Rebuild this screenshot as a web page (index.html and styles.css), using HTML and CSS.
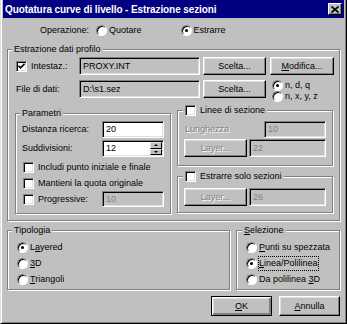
FILE: index.html
```html
<!DOCTYPE html>
<html lang="it">
<head>
    <meta charset="UTF-8">
    <meta name="viewport" content="width=device-width, initial-scale=1.0">
    <title>Quotatura curve di livello - Estrazione sezioni</title>
    <link rel="stylesheet" href="styles.css">
</head>
<body>
    <div class="window">
        <div class="titlebar">
            <span class="title">Quotatura curve di livello - Estrazione sezioni</span>
            <span class="close">
                <svg width="8" height="7" viewBox="0 0 8 7"><path d="M0.5 0.5 L7.5 6.5 M7.5 0.5 L0.5 6.5" stroke="#000" stroke-width="1.6" fill="none"/></svg>
            </span>
        </div>

        <div class="op-row">
            <span class="op-label">Operazione:</span>
            <span class="opt op-quotare"><span class="radio"></span>Quotare</span>
            <span class="opt op-estrarre"><span class="radio on"></span>Estrarre</span>
        </div>

        <div class="group profilo">
            <span class="caption">Estrazione dati profilo</span>
            <div class="row">
                <span class="cell-label"><span class="check on"><svg width="7" height="7" viewBox="0 0 7 7"><path d="M0.5 2.8 L2.6 4.9 L6.5 0.8" stroke="#000" stroke-width="1.6" fill="none"/></svg></span>Intestaz.:</span>
                <span class="field ro file">PROXY.INT</span>
                <span class="btn sel">Scelta...</span>
                <span class="btn mod"><span><u>M</u>odifica...</span></span>
            </div>
            <div class="row row-file">
                <span class="cell-label">File di dati:</span>
                <span class="field ro file">D:\s1.sez</span>
                <span class="btn sel">Scelta...</span>
                <div class="fmt">
                    <span class="opt"><span class="radio on"></span>n, d, q</span>
                    <span class="opt"><span class="radio"></span>n, x, y, z</span>
                </div>
            </div>

            <div class="lower">
                <div class="group parametri">
                    <span class="caption">Parametri</span>
                    <div class="prow">
                        <span class="plabel">Distanza ricerca:</span>
                        <span class="field num">20</span>
                    </div>
                    <div class="prow prow-gap">
                        <span class="plabel">Suddivisioni:</span>
                        <span class="field num">12
                            <span class="spin"><span class="up"></span><span class="down"></span></span>
                        </span>
                    </div>
                    <div class="crow crow-first"><span class="check"></span>Includi punto iniziale e finale</div>
                    <div class="crow"><span class="check"></span>Mantieni la quota originale</div>
                    <div class="crow">
                        <span class="clabel"><span class="check"></span>Progressive:</span>
                        <span class="field num dis">10</span>
                    </div>
                </div>

                <div class="side">
                    <div class="group linee">
                        <span class="caption"><span class="check"></span>Linee di sezione</span>
                        <div class="lrow">
                            <span class="llabel disabled">Lunghezza</span>
                            <span class="field num dis">10</span>
                        </div>
                        <div class="layer-row layer-gap">
                            <span class="btn layer disabled">Layer...</span>
                            <span class="field lfield dis">22</span>
                        </div>
                    </div>
                    <div class="group solo">
                        <span class="caption"><span class="check"></span>Estrarre solo sezioni</span>
                        <div class="layer-row">
                            <span class="btn layer disabled">Layer...</span>
                            <span class="field lfield dis">26</span>
                        </div>
                    </div>
                </div>
            </div>
        </div>

        <div class="bottom">
            <div class="group tipologia">
                <span class="caption"><span>Tipologia</span></span>
                <span class="opt ropt"><span class="radio on"></span><span>L<u>a</u>yered</span></span>
                <span class="opt ropt"><span class="radio"></span><span><u>3</u>D</span></span>
                <span class="opt ropt"><span class="radio"></span><span><u>T</u>riangoli</span></span>
            </div>
            <div class="group selezione">
                <span class="caption"><span><u>S</u>elezione</span></span>
                <span class="opt ropt"><span class="radio"></span><span><u>P</u>unti su spezzata</span></span>
                <span class="opt ropt"><span class="radio on"></span><span class="focus"><u>L</u>inea/Polilinea</span></span>
                <span class="opt ropt"><span class="radio"></span><span>Da polilinea <u>3</u>D</span></span>
            </div>
        </div>

        <div class="actions">
            <span class="btn big default"><span><u>O</u>K</span></span>
            <span class="btn big"><span><u>A</u>nnulla</span></span>
        </div>
    </div>
</body>
</html>
```

FILE: styles.css
```css
* {
    box-sizing: border-box;
}
body {
    margin: 0;
    background-color: #c0c0c0;
    font-family: "Liberation Sans", Arial, sans-serif;
    font-size: 9px;
    line-height: 13px;
    color: #000;
}
.window {
    width: 347px;
    height: 324px;
    background: #c0c0c0;
    border-left: 1px solid #dfdfdf;
    border-right: 1px solid #000;
    border-bottom: 1px solid #000;
    box-shadow: inset 1px 0 #fff, inset -1px -1px #808080;
    padding: 0 2px 2px 2px;
    display: flex;
    flex-direction: column;
}
.titlebar {
    height: 18px;
    background: #000080;
    color: #fff;
    display: flex;
    align-items: center;
    padding-left: 2px;
}
.title {
    font-weight: bold;
    font-size: 10px;
    letter-spacing: -0.1px;
}
.close {
    margin-left: auto;
    margin-right: 2px;
    width: 14px;
    height: 12px;
    background: #c0c0c0;
    border: 1px solid;
    border-color: #fff #000 #000 #fff;
    box-shadow: inset -1px -1px #808080;
    display: flex;
    align-items: center;
    justify-content: center;
}

/* radios and checkboxes */
.opt {
    display: flex;
    align-items: center;
    white-space: nowrap;
}
.radio {
    width: 11px;
    height: 11px;
    border-radius: 50%;
    border: 1px solid;
    border-color: #808080 #fff #fff #808080;
    box-shadow: inset 1px 1px #000;
    background: #fff;
    margin-right: 2px;
    display: flex;
    align-items: center;
    justify-content: center;
    flex: none;
}
.radio.on::after {
    content: "";
    width: 3px;
    height: 3px;
    border-radius: 50%;
    background: #000;
}
.check {
    width: 11px;
    height: 11px;
    border: 1px solid;
    border-color: #808080 #fff #fff #808080;
    box-shadow: inset 1px 1px #000, inset -1px -1px #dfdfdf;
    background: #fff;
    margin-right: 4px;
    display: flex;
    align-items: center;
    justify-content: center;
    flex: none;
}

/* operation row */
.op-row {
    display: flex;
    height: 13px;
    margin-top: 6px;
    padding-left: 37px;
}
.op-quotare {
    margin-left: 7px;
}
.op-estrarre {
    margin-left: 39px;
}

/* group boxes */
.group {
    position: relative;
    border: 1px solid #808080;
    box-shadow: 1px 1px 0 #fff, inset 1px 1px 0 #fff;
}
.caption {
    position: absolute;
    top: -7px;
    left: 4px;
    padding: 0 2px;
    background: #c0c0c0;
    display: flex;
    align-items: center;
    white-space: nowrap;
}

/* fields and buttons */
.field {
    display: flex;
    align-items: center;
    height: 18px;
    padding-left: 3px;
    border: 1px solid;
    border-color: #808080 #fff #fff #808080;
    box-shadow: inset 1px 1px #000, inset -1px -1px #dfdfdf;
    background: #fff;
}
.field.ro {
    background: #c0c0c0;
}
.field.dis {
    background: #c0c0c0;
    color: #808080;
}
.btn {
    display: flex;
    align-items: center;
    justify-content: center;
    height: 18px;
    background: #c0c0c0;
    border: 1px solid;
    border-color: #fff #000 #000 #fff;
    box-shadow: inset -1px -1px #808080, inset 1px 1px #dfdfdf;
}
.disabled {
    color: #808080;
    text-shadow: 1px 1px 0 #fff;
}

/* Estrazione dati profilo */
.profilo {
    width: 333px;
    height: 172px;
    margin: 12px 0 0 4px;
    padding: 7px 0 0 8px;
}
.row {
    display: flex;
    align-items: center;
    height: 18px;
}
.row-file {
    margin-top: 5px;
}
.cell-label {
    width: 63px;
    display: flex;
    align-items: center;
}
.field.file {
    width: 121px;
}
.btn.sel {
    width: 63px;
    margin-left: 3px;
}
.btn.mod {
    width: 64px;
    margin-left: 4px;
}
.fmt {
    align-self: flex-start;
    margin-left: 6px;
    line-height: 11px;
}
.lower {
    display: flex;
    align-items: flex-start;
    margin-top: 12px;
}
.parametri {
    width: 156px;
    height: 101px;
    margin: 3px 0 0 -1px;
    padding: 7px 0 0 6px;
}
.prow {
    display: flex;
    align-items: center;
    height: 17px;
}
.prow-gap {
    margin-top: 2px;
}
.plabel {
    width: 80px;
}
.field.num {
    width: 62px;
    height: 17px;
}
.spin {
    margin-left: auto;
    margin-right: 1px;
    width: 12px;
    height: 13px;
    display: flex;
    flex-direction: column;
}
.spin span {
    flex: 1;
    display: flex;
    align-items: center;
    justify-content: center;
    background: #c0c0c0;
    border: 1px solid;
    border-color: #dfdfdf #000 #000 #dfdfdf;
}
.spin .up::before {
    content: "";
    border-left: 2px solid transparent;
    border-right: 2px solid transparent;
    border-bottom: 2px solid #000;
}
.spin .down::before {
    content: "";
    border-left: 2px solid transparent;
    border-right: 2px solid transparent;
    border-top: 2px solid #000;
}
.crow {
    display: flex;
    align-items: center;
    height: 16px;
    padding-left: 1px;
}
.crow-first {
    margin-top: 2px;
}
.clabel {
    width: 79px;
    display: flex;
    align-items: center;
}
.crow .field.num {
    height: 16px;
}
.side {
    margin-left: 6px;
}
.linee {
    width: 156px;
    height: 56px;
    padding: 10px 0 0 6px;
}
.linee .caption, .solo .caption {
    left: 5px;
}
.lrow {
    display: flex;
    align-items: center;
    height: 17px;
}
.llabel {
    width: 80px;
    padding-left: 1px;
}
.layer-row {
    display: flex;
    align-items: center;
}
.layer-gap {
    margin-top: 1px;
}
.btn.layer {
    width: 63px;
}
.field.lfield {
    width: 77px;
    margin-left: 2px;
}
.solo {
    width: 156px;
    height: 37px;
    margin-top: 10px;
    padding: 11px 0 0 6px;
}

/* bottom */
.bottom {
    display: flex;
    margin: 9px 0 0 4px;
}
.tipologia {
    width: 223px;
    height: 60px;
    padding: 8px 0 0 9px;
}
.selezione {
    width: 104px;
    height: 60px;
    margin-left: 6px;
    padding: 8px 0 0 9px;
}
.selezione .caption {
    left: 5px;
}
.ropt {
    height: 16px;
}
.focus {
    outline: 1px dotted #000;
    outline-offset: 0;
}
.actions {
    display: flex;
    justify-content: flex-end;
    gap: 7px;
    margin-top: 6px;
    padding-right: 4px;
}
.btn.big {
    width: 61px;
    height: 20px;
}
.btn.default {
    border-color: #000;
    box-shadow: inset 1px 1px #fff, inset -2px -2px #808080, inset 2px 2px #dfdfdf;
}
```
